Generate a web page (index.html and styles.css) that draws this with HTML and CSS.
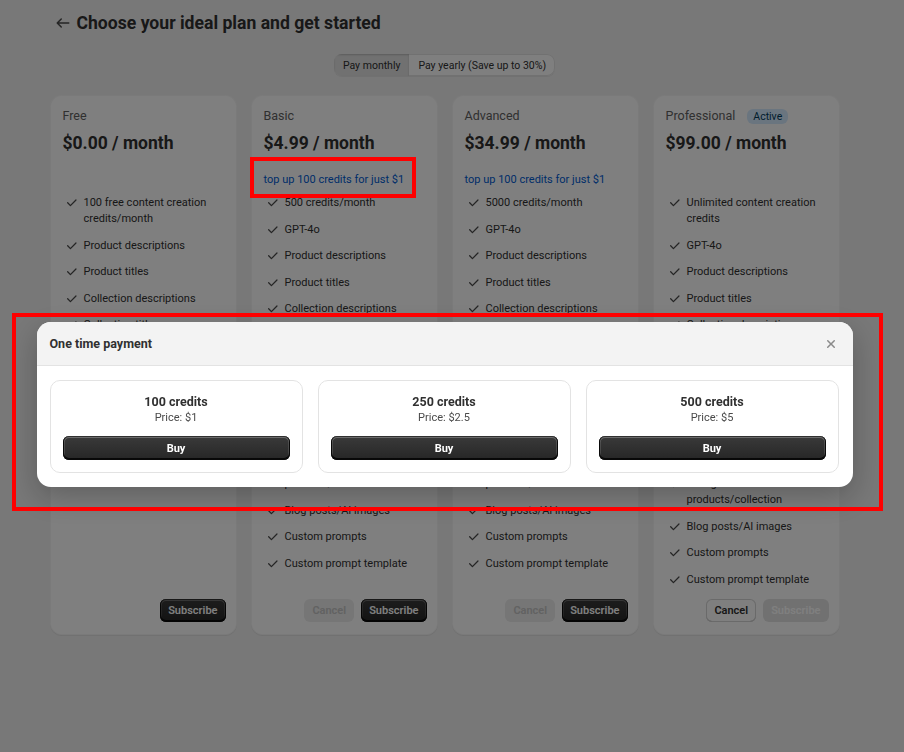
FILE: index.html
```html
<!DOCTYPE html>
<html lang="en">
<head>
<meta charset="utf-8">
<title>Choose your ideal plan</title>
<link rel="stylesheet" href="styles.css">
</head>
<body>
<div class="page">
  <header class="top">
    <button class="back" aria-label="Back">
      <svg viewBox="0 0 20 20" width="20" height="20"><path d="M16.5 10a.75.75 0 0 1-.75.75h-9.69l2.72 2.72a.75.75 0 0 1-1.06 1.06l-4-4a.75.75 0 0 1 0-1.060l4-4a.75.75 0 0 1 1.06 1.06l-2.72 2.72h9.69a.75.75 0 0 1 .75.75Z"/></svg>
    </button>
    <h1 class="title">Choose your ideal plan and get started</h1>
  </header>

  <div class="toggle-row">
    <div class="toggle">
      <button class="seg seg-on">Pay monthly</button>
      <button class="seg">Pay yearly (Save up to 30%)</button>
    </div>
  </div>

  <div class="plans">
    <section class="plan">
      <div class="plan-head"><span class="plan-name">Free</span></div>
      <div class="price">$0.00 / month</div>
      <div class="topup"></div>
      <ul class="features">
        <li>100 free content creation credits/month</li>
        <li>Product descriptions</li>
        <li>Product titles</li>
        <li>Collection descriptions</li>
        <li>Collection titles</li>
        <li>SEO meta titles</li>
        <li>SEO meta descriptions</li>
        <li>Image alt text</li>
        <li>Product tags</li>
      </ul>
      <div class="actions"><button class="btn btn-primary">Subscribe</button></div>
    </section>

    <section class="plan">
      <div class="plan-head"><span class="plan-name">Basic</span></div>
      <div class="price">$4.99 / month</div>
      <div class="topup"><a class="link" href="#">top up 100 credits for just $1</a></div>
      <ul class="features">
        <li>500 credits/month</li>
        <li>GPT-4o</li>
        <li>Product descriptions</li>
        <li>Product titles</li>
        <li>Collection descriptions</li>
        <li>Collection titles</li>
        <li>SEO meta titles</li>
        <li>SEO meta descriptions</li>
        <li>Image alt text</li>
        <li>Product tags</li>
        <li>Bulk generation for products/collection</li>
        <li>Blog posts/AI images</li>
        <li>Custom prompts</li>
        <li>Custom prompt template</li>
      </ul>
      <div class="actions"><button class="btn btn-disabled">Cancel</button><button class="btn btn-primary">Subscribe</button></div>
    </section>

    <section class="plan">
      <div class="plan-head"><span class="plan-name">Advanced</span></div>
      <div class="price">$34.99 / month</div>
      <div class="topup"><a class="link" href="#">top up 100 credits for just $1</a></div>
      <ul class="features">
        <li>5000 credits/month</li>
        <li>GPT-4o</li>
        <li>Product descriptions</li>
        <li>Product titles</li>
        <li>Collection descriptions</li>
        <li>Collection titles</li>
        <li>SEO meta titles</li>
        <li>SEO meta descriptions</li>
        <li>Image alt text</li>
        <li>Product tags</li>
        <li>Bulk generation for products/collection</li>
        <li>Blog posts/AI images</li>
        <li>Custom prompts</li>
        <li>Custom prompt template</li>
      </ul>
      <div class="actions"><button class="btn btn-disabled">Cancel</button><button class="btn btn-primary">Subscribe</button></div>
    </section>

    <section class="plan">
      <div class="plan-head"><span class="plan-name">Professional</span><span class="badge">Active</span></div>
      <div class="price">$99.00 / month</div>
      <div class="topup"></div>
      <ul class="features">
        <li>Unlimited content creation credits</li>
        <li>GPT-4o</li>
        <li>Product descriptions</li>
        <li>Product titles</li>
        <li>Collection descriptions</li>
        <li>Collection titles</li>
        <li>SEO meta titles</li>
        <li>SEO meta descriptions</li>
        <li>Image alt text</li>
        <li>Product tags</li>
        <li>Bulk generation for products/collection</li>
        <li>Blog posts/AI images</li>
        <li>Custom prompts</li>
        <li>Custom prompt template</li>
      </ul>
      <div class="actions"><button class="btn btn-secondary">Cancel</button><button class="btn btn-primary-disabled">Subscribe</button></div>
    </section>
  </div>
</div>

<div class="backdrop">
  <div class="modal" role="dialog">
    <div class="modal-head">
      <h2 class="modal-title">One time payment</h2>
      <button class="close" aria-label="Close">
        <svg viewBox="0 0 20 20" width="20" height="20"><path d="M12.72 13.78a.75.75 0 1 0 1.06-1.06l-2.72-2.72 2.72-2.72a.75.75 0 0 0-1.06-1.06l-2.72 2.72-2.720-2.72a.75.75 0 0 0-1.06 1.06l2.72 2.72-2.72 2.72a.75.75 0 1 0 1.06 1.06l2.72-2.72 2.72 2.72Z"/></svg>
      </button>
    </div>
    <div class="modal-body">
      <div class="option">
        <div class="opt-title">100 credits</div>
        <div class="opt-price">Price: $1</div>
        <button class="buy">Buy</button>
      </div>
      <div class="option">
        <div class="opt-title">250 credits</div>
        <div class="opt-price">Price: $2.5</div>
        <button class="buy">Buy</button>
      </div>
      <div class="option">
        <div class="opt-title">500 credits</div>
        <div class="opt-price">Price: $5</div>
        <button class="buy">Buy</button>
      </div>
    </div>
  </div>
</div>

<div class="mark mark-topup"></div>
<div class="mark mark-modal"></div>
</body>
</html>
```

FILE: styles.css
```css
* { box-sizing: border-box; }

html, body {
  margin: 0;
  height: 100%;
}

body {
  background: #f1f1f1;
  font-family: "Segoe UI", Roboto, "Noto Sans", sans-serif;
  color: #303030;
  padding-right: 15px;
}

button {
  font-family: inherit;
  cursor: pointer;
}

.page {
  width: 790px;
  margin: 0 auto;
  padding-top: 11px;
}

/* header */
.top {
  display: flex;
  align-items: center;
  gap: 3px;
  height: 24px;
}

.back {
  border: 0;
  background: none;
  padding: 0;
  width: 22px;
  height: 22px;
  display: flex;
  align-items: center;
  justify-content: center;
  margin-left: 2px;
}

.back svg { fill: #4a4a4a; }

.title {
  margin: 0;
  font-size: 17.6px;
  line-height: 24px;
  font-weight: 700;
  color: #303030;
}

/* toggle */
.toggle-row {
  display: flex;
  justify-content: center;
  margin-top: 19px;
}

.toggle {
  display: flex;
  border-radius: 8px;
  background: #fff;
  box-shadow: inset 0 0 0 1px #e3e3e3, 0 1px 0 rgba(0,0,0,.06);
  overflow: hidden;
}

.seg {
  height: 22px;
  border: 0;
  background: transparent;
  font-size: 10.5px;
  color: #303030;
  padding: 0 9px;
  font-weight: 400;
}

.seg-on {
  background: #e3e3e3;
  box-shadow: inset 0 1px 2px rgba(0,0,0,.2);
}

/* plans */
.plans {
  display: grid;
  grid-template-columns: repeat(4, 1fr);
  gap: 14px;
  margin-top: 19px;
}

.plan {
  background: #fff;
  border-radius: 12px;
  box-shadow: 0 1px 0 rgba(26,26,26,.07), inset 0 0 0 1px rgba(0,0,0,.04);
  padding: 13px 11px 13px 13px;
  display: flex;
  flex-direction: column;
}

.plan-head {
  display: flex;
  align-items: center;
  gap: 12px;
  height: 16px;
}

.plan-name {
  font-size: 12.5px;
  line-height: 16px;
  color: #616161;
}

.badge {
  font-size: 10.5px;
  line-height: 15px;
  padding: 0 6px;
  border-radius: 6px;
  background: #d5ebff;
  color: #003a5a;
}

.price {
  margin-top: 8px;
  font-size: 17.5px;
  line-height: 22px;
  font-weight: 700;
  color: #303030;
}

.topup {
  margin-top: 18px;
  height: 16px;
  font-size: 11px;
  line-height: 16px;
}

.link {
  color: #005bd3;
  text-decoration: none;
}

.features {
  list-style: none;
  margin: 7px 0 0;
  padding: 0;
  display: flex;
  flex-direction: column;
  gap: 10.54px;
}

.features li {
  display: flex;
  gap: 4px;
  font-size: 11px;
  line-height: 16px;
  color: #303030;
  padding-right: 2px;
}

.features li::before {
  content: "";
  flex: 0 0 17px;
  height: 16px;
  background: no-repeat center / 17px 17px url("data:image/svg+xml,%3Csvg xmlns='http://www.w3.org/2000/svg' viewBox='0 0 20 20'%3E%3Cpath fill='%234a4a4a' d='M15.78 5.97a.75.75 0 0 1 0 1.06l-6.5 6.5a.75.75 0 0 1-1.06 0l-3.25-3.25a.75.75 0 1 1 1.06-1.06l2.72 2.72 5.97-5.97a.75.75 0 0 1 1.06 0Z'/%3E%3C/svg%3E");
}

.actions {
  margin-top: auto;
  padding-top: 11px;
  display: flex;
  justify-content: flex-end;
  gap: 7px;
}

.btn {
  height: 23px;
  border: 0;
  border-radius: 6px;
  font-size: 11px;
  font-weight: 600;
  padding: 0 8px;
}

.btn-primary {
  background: linear-gradient(#3a3a3a, #262626);
  color: #fff;
  box-shadow: inset 0 -1px 0 1px rgba(0,0,0,.8), inset 0 0 0 1px #303030, inset 0 .5px 0 1.5px rgba(255,255,255,.25);
}

.btn-disabled {
  background: #ececec;
  color: #c4c4c4;
  padding: 0 8px;
}

.btn-secondary {
  background: #fff;
  color: #303030;
  box-shadow: inset 0 0 0 1px #d4d4d4, inset 0 -1px 0 0 #b5b5b5;
  padding: 0 8px;
}

.btn-primary-disabled {
  background: #e3e3e3;
  color: #fff;
  padding: 0 8px;
}

/* modal */
.backdrop {
  position: fixed;
  inset: 0;
  background: rgba(0,0,0,.5);
  display: flex;
  justify-content: center;
  align-items: flex-start;
  padding: 322px 15px 0 0;
}

.modal {
  width: 816px;
  background: #fff;
  border-radius: 14px;
  overflow: hidden;
  box-shadow: 0 10px 30px rgba(0,0,0,.25);
}

.modal-head {
  height: 44px;
  background: #f3f3f3;
  border-bottom: 1px solid #e3e3e3;
  display: flex;
  align-items: center;
  justify-content: space-between;
  padding: 0 12px 0 13px;
}

.modal-title {
  margin: 0;
  font-size: 12.5px;
  font-weight: 700;
  color: #303030;
}

.close {
  border: 0;
  background: none;
  padding: 0;
  width: 20px;
  height: 20px;
  display: flex;
}

.close svg { fill: #8a8a8a; }

.modal-body {
  display: grid;
  grid-template-columns: repeat(3, 1fr);
  gap: 15px;
  padding: 14px 14px 14px 13px;
}

.option {
  border: 1px solid #e3e3e3;
  border-radius: 10px;
  padding: 13px 12px 12px;
  display: flex;
  flex-direction: column;
  align-items: stretch;
  text-align: center;
}

.opt-title {
  font-size: 12.5px;
  line-height: 16px;
  font-weight: 700;
  color: #303030;
}

.opt-price {
  font-size: 11px;
  line-height: 16px;
  color: #4a4a4a;
}

.buy {
  margin-top: 10px;
  height: 24px;
  border: 0;
  border-radius: 6px;
  background: linear-gradient(#3a3a3a, #262626);
  color: #fff;
  font-size: 11px;
  font-weight: 700;
  box-shadow: inset 0 -1px 0 1px rgba(0,0,0,.8), inset 0 0 0 1px #303030, inset 0 .5px 0 1.5px rgba(255,255,255,.25);
}

/* annotation marks */
.mark {
  position: absolute;
  border: 4px solid #ff0000;
  pointer-events: none;
}

.mark-topup {
  left: 250px;
  top: 157px;
  width: 166px;
  height: 41px;
}

.mark-modal {
  left: 12px;
  top: 313px;
  width: 871px;
  height: 198px;
}
```
